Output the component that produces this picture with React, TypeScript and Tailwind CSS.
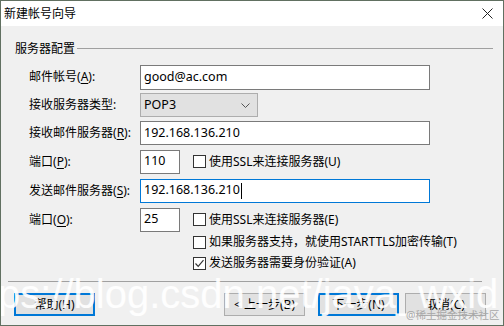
import React from 'react';

const font = "font-['Noto_Sans','Noto_Sans_CJK_SC',sans-serif]";

const Label = ({ text, k }: { text: string; k: string }) => (
  <div className="w-[111px] shrink-0 text-[12px] text-black leading-none whitespace-nowrap">
    {text}(<span className="underline underline-offset-2">{k}</span>):
  </div>
);

const Input = ({ value, w, focus, h = 'h-[24px]' }: { value: string; w: string; focus?: boolean; h?: string }) => (
  <div
    className={`${w} ${h} bg-white border flex items-center pl-[3px] text-[12.5px] text-black leading-none ${
      focus ? 'border-[#0078d7]' : 'border-[#7a7a7a]'
    }`}
  >
    {value}
    {focus && <span className="inline-block w-px h-[16px] bg-black ml-px" />}
  </div>
);

const Check = ({ label, checked }: { label: string; checked?: boolean }) => (
  <div className="flex items-center gap-[3px]">
    <div className="w-[13px] h-[13px] border border-[#333] bg-white flex items-center justify-center">
      {checked && (
        <svg width="11" height="11" viewBox="0 0 11 11">
          <path d="M1.5 5.5 L4.2 8.3 L9.5 2.2" fill="none" stroke="#333" strokeWidth="1.2" />
        </svg>
      )}
    </div>
    <span className="text-[12px] text-black leading-none whitespace-nowrap">{label}</span>
  </div>
);

const Button = ({ text, primary }: { text: string; primary?: boolean }) => (
  <div
    className={`w-[81px] h-[23px] bg-[#e1e1e1] flex items-center justify-center text-[12px] text-black leading-none ${
      primary ? 'border-2 border-[#0078d7]' : 'border border-[#adadad]'
    }`}
  >
    {text}
  </div>
);

export default function App() {
  return (
    <div className={`relative w-[504px] h-[326px] border border-[#617061] flex flex-col overflow-hidden ${font}`}>
      {/* Title bar */}
      <div className="h-[25px] bg-white flex items-center justify-between pl-[3px] pr-[10px]">
        <span className="text-[12px] text-black leading-none">新建帐号向导</span>
        <svg width="11" height="11" viewBox="0 0 11 11">
          <path d="M0.5 0.5 L10.5 10.5 M10.5 0.5 L0.5 10.5" stroke="#222" strokeWidth="1" />
        </svg>
      </div>

      {/* Body */}
      <div className="flex-1 bg-[#f0f0f0] flex flex-col pt-[15px]">
        {/* Group header */}
        <div className="h-[16px] flex items-center pl-[14px] pr-[10px]">
          <span className="text-[12px] text-black leading-none">服务器配置</span>
          <div className="flex-1 h-px bg-[#a0a0a0] ml-[2px] -mt-[2px]" />
        </div>

        <div className="flex flex-col pl-[28px] mt-[6px]">
          <div className="h-[28px] flex items-center">
            <Label text="邮件帐号" k="A" />
            <Input value="good@ac.com" w="w-[290px]" h="h-[25px]" />
          </div>
          <div className="h-[28px] flex items-center">
            <div className="w-[111px] shrink-0 text-[12px] text-black leading-none">接收服务器类型:</div>
            <div className="w-[118px] h-[24px] bg-[#e1e1e1] border border-[#adadad] flex items-center justify-between pl-[3px] pr-[7px] text-[12.5px] leading-none text-black">
              POP3
              <svg width="9" height="5" viewBox="0 0 9 5">
                <path d="M0.5 0.5 L4.5 4.5 L8.5 0.5" fill="none" stroke="#555" strokeWidth="1" />
              </svg>
            </div>
          </div>
          <div className="h-[28px] flex items-center">
            <Label text="接收邮件服务器" k="R" />
            <Input value="192.168.136.210" w="w-[290px]" />
          </div>
          <div className="h-[29px] flex items-center">
            <Label text="端口" k="P" />
            <Input value="110" w="w-[40px]" />
            <div className="ml-[13px]">
              <Check label="使用SSL来连接服务器(U)" />
            </div>
          </div>
          <div className="h-[29px] flex items-center">
            <Label text="发送邮件服务器" k="S" />
            <Input value="192.168.136.210" w="w-[290px]" focus />
          </div>
          <div className="h-[29px] flex items-center">
            <Label text="端口" k="O" />
            <Input value="25" w="w-[40px]" />
            <div className="ml-[13px]">
              <Check label="使用SSL来连接服务器(E)" />
            </div>
          </div>
          <div className="h-[16px] flex items-center pl-[164px]">
            <Check label="如果服务器支持，就使用STARTTLS加密传输(T)" />
          </div>
          <div className="h-[16px] flex items-center pl-[164px] mt-[5px]">
            <Check label="发送服务器需要身份验证(A)" checked />
          </div>
        </div>

        {/* Separator */}
        <div className="h-px w-[474px] bg-[#a0a0a0] ml-[7px] mt-[10px]" />

        {/* Buttons */}
        <div className="flex items-center mt-[11px] pl-[13px] pr-[17px]">
          <Button text="帮助(H)" primary />
          <div className="flex-1" />
          <Button text="< 上一步(B)" />
          <div className="ml-[13px]">
            <Button text="下一步(N)" primary />
          </div>
          <div className="ml-[6px]">
            <Button text="取消(C)" />
          </div>
        </div>
      </div>

      {/* Watermarks */}
      <div className="absolute left-[-3px] top-[273px] text-[40px] leading-none text-white/90 font-['Liberation_Sans',sans-serif] whitespace-nowrap pointer-events-none">
        ps://blog.csdn.net/java_wxid
      </div>
      <div className="absolute left-[405px] top-[309px] text-[10.5px] leading-none text-[#a8a8a8] whitespace-nowrap pointer-events-none">
        @稀土掘金技术社区
      </div>
    </div>
  );
}
